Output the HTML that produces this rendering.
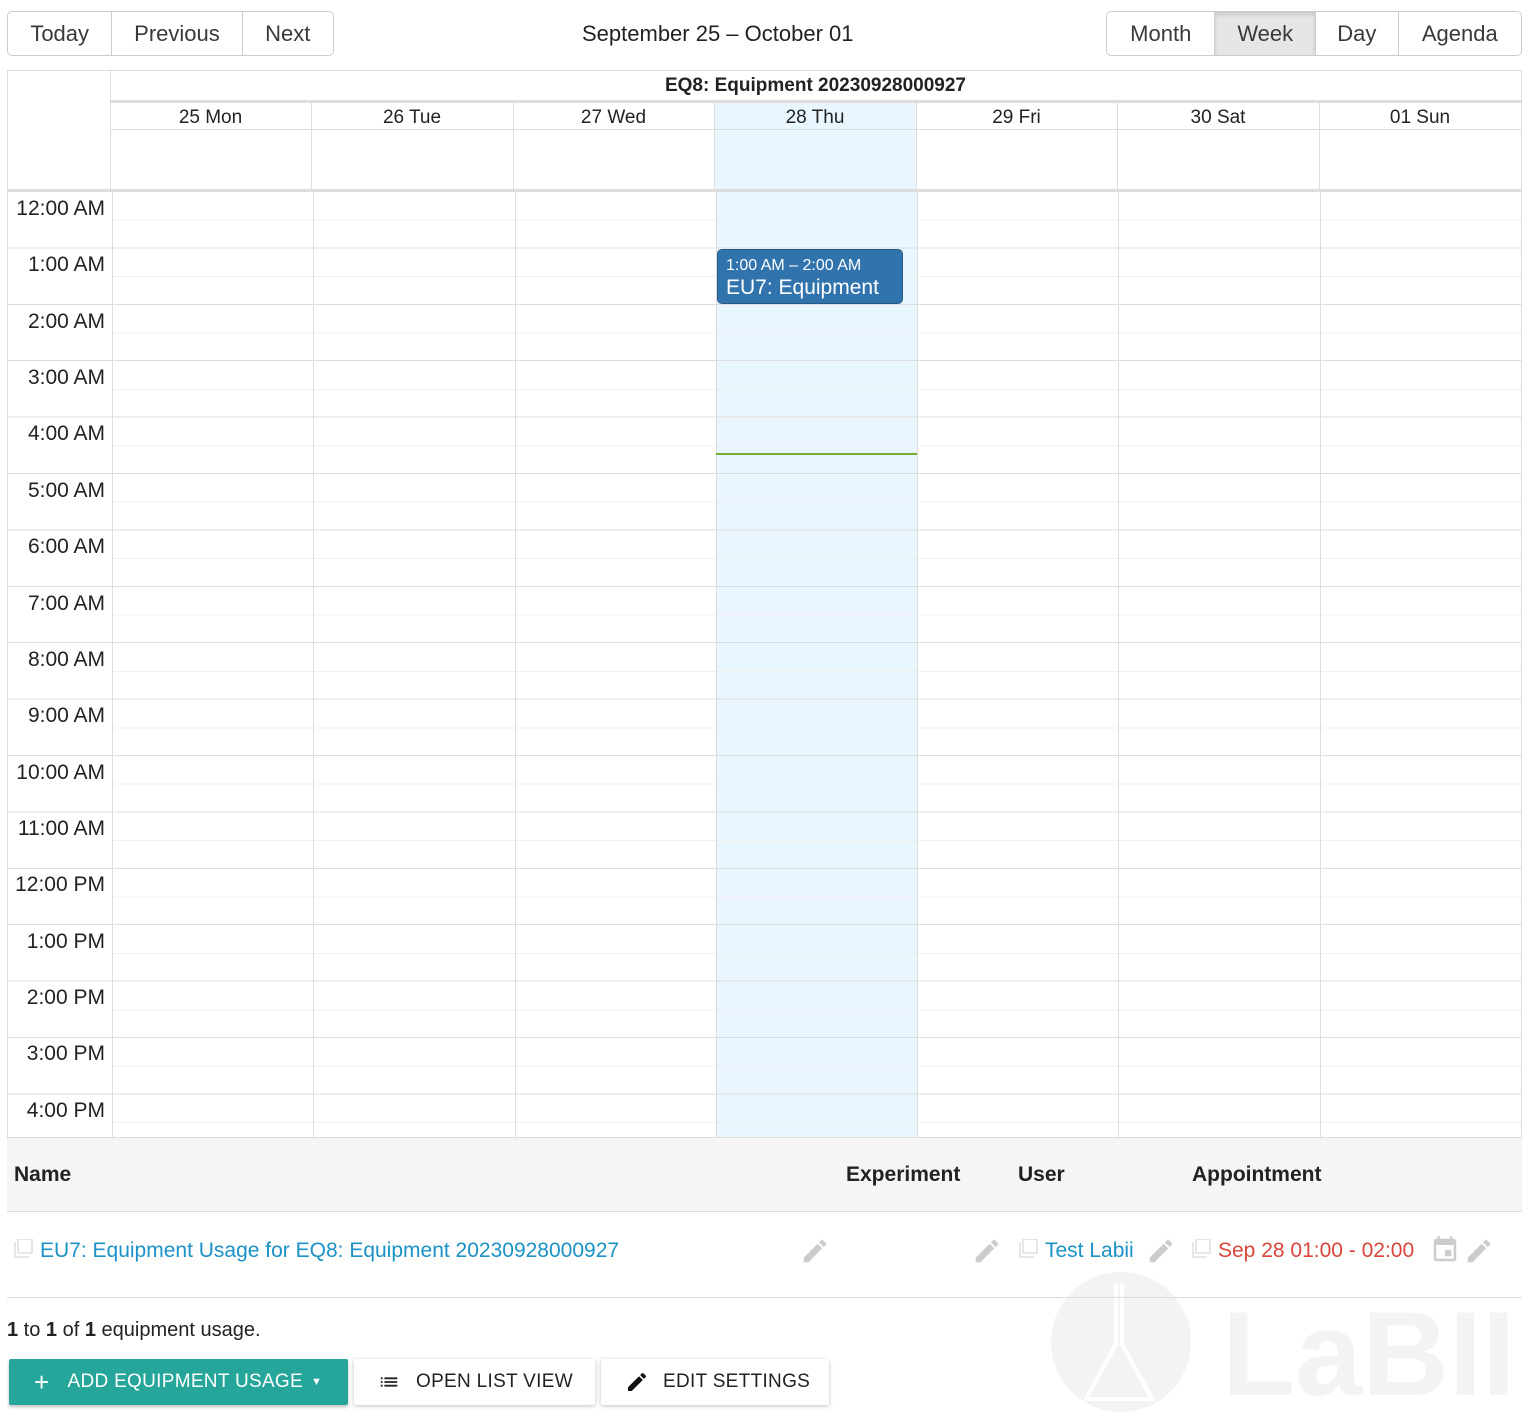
<!DOCTYPE html>
<html><head><meta charset="utf-8">
<style>
*{box-sizing:border-box;margin:0;padding:0}
body{width:1536px;height:1419px;background:#fff;font-family:"Liberation Sans",Arial,sans-serif;color:#333;position:relative;overflow:hidden}
.a{position:absolute}
.btng{position:absolute;top:11px;height:45px;border:1px solid #ccc;border-radius:5px;display:flex;overflow:hidden}
.btng div{height:100%;display:flex;align-items:center;justify-content:center;font-size:22px;color:#373a3c;border-right:1px solid #ccc}
.btng div:last-child{border-right:none}
.hl{position:absolute;background:#ddd}
.tl{position:absolute;left:6px;width:99px;text-align:right;font-size:21px;color:#222}
.dh{position:absolute;top:103px;height:27px;font-size:19px;color:#222;text-align:center;line-height:27px}
.th{position:absolute;top:1163px;font-size:21px;font-weight:bold;color:#222}
.pen{position:absolute}
</style></head><body>
<div class="btng" style="left:7px;width:327px">
<div style="width:105px">Today</div><div style="width:131px">Previous</div><div style="width:91px">Next</div></div>
<div class="a" style="left:582px;top:21px;font-size:22px;color:#222">September 25 – October 01</div>
<div class="btng" style="left:1106px;width:416px">
<div style="width:109px">Month</div><div style="width:101px;background:#e6e6e6;box-shadow:inset 0 3px 5px rgba(0,0,0,.12)">Week</div><div style="width:83px">Day</div><div style="width:123px">Agenda</div></div>

<div class="a" style="left:7px;top:70px;width:1515px;height:1068px;border:1px solid #ddd"></div>
<div class="a" style="left:714px;top:102px;width:202px;height:88px;background:#eaf6ff"></div>
<div class="a" style="left:716px;top:192px;width:201px;height:945px;background:#eaf6ff"></div>
<div class="hl" style="left:110px;top:70px;width:1px;height:121px"></div>
<div class="hl" style="left:110px;top:100px;width:1411px;height:3px"></div>
<div class="a" style="left:110px;top:75px;width:1411px;text-align:center;font-size:19px;font-weight:bold;color:#222">EQ8: Equipment 20230928000927</div>
<div class="hl" style="left:110px;top:129px;width:1411px;height:1px"></div>
<div class="hl" style="left:8px;top:189px;width:1513px;height:3px"></div>
<div class="hl" style="left:311px;top:102px;width:1px;height:88px"></div>
<div class="hl" style="left:513px;top:102px;width:1px;height:88px"></div>
<div class="hl" style="left:714px;top:102px;width:1px;height:88px"></div>
<div class="hl" style="left:916px;top:102px;width:1px;height:88px"></div>
<div class="hl" style="left:1117px;top:102px;width:1px;height:88px"></div>
<div class="hl" style="left:1319px;top:102px;width:1px;height:88px"></div>
<div class="dh" style="left:110px;width:201px;top:104px">25 Mon</div>
<div class="dh" style="left:311px;width:202px;top:104px">26 Tue</div>
<div class="dh" style="left:513px;width:201px;top:104px">27 Wed</div>
<div class="dh" style="left:714px;width:202px;top:104px">28 Thu</div>
<div class="dh" style="left:916px;width:201px;top:104px">29 Fri</div>
<div class="dh" style="left:1117px;width:202px;top:104px">30 Sat</div>
<div class="dh" style="left:1319px;width:202px;top:104px">01 Sun</div>
<div class="a" style="left:112px;top:192px;width:1409px;height:945px;background:repeating-linear-gradient(to bottom,transparent 0,transparent 27.7px,#f0f0f0 27.7px,#f0f0f0 28.7px,transparent 28.7px,transparent 55.4px,#ddd 55.4px,#ddd 56.4px)"></div>
<div class="a" style="left:8px;top:192px;width:104px;height:945px;background:repeating-linear-gradient(to bottom,transparent 0,transparent 55.4px,#ddd 55.4px,#ddd 56.4px)"></div>
<div class="hl" style="left:112px;top:192px;width:1px;height:945px"></div>
<div class="hl" style="left:313px;top:192px;width:1px;height:945px"></div>
<div class="hl" style="left:515px;top:192px;width:1px;height:945px"></div>
<div class="hl" style="left:716px;top:192px;width:1px;height:945px"></div>
<div class="hl" style="left:917px;top:192px;width:1px;height:945px"></div>
<div class="hl" style="left:1118px;top:192px;width:1px;height:945px"></div>
<div class="hl" style="left:1320px;top:192px;width:1px;height:945px"></div>
<div class="tl" style="top:197px">12:00 AM</div>
<div class="tl" style="top:253px">1:00 AM</div>
<div class="tl" style="top:310px">2:00 AM</div>
<div class="tl" style="top:366px">3:00 AM</div>
<div class="tl" style="top:422px">4:00 AM</div>
<div class="tl" style="top:479px">5:00 AM</div>
<div class="tl" style="top:535px">6:00 AM</div>
<div class="tl" style="top:592px">7:00 AM</div>
<div class="tl" style="top:648px">8:00 AM</div>
<div class="tl" style="top:704px">9:00 AM</div>
<div class="tl" style="top:761px">10:00 AM</div>
<div class="tl" style="top:817px">11:00 AM</div>
<div class="tl" style="top:873px">12:00 PM</div>
<div class="tl" style="top:930px">1:00 PM</div>
<div class="tl" style="top:986px">2:00 PM</div>
<div class="tl" style="top:1042px">3:00 PM</div>
<div class="tl" style="top:1099px">4:00 PM</div>
<div class="a" style="left:717px;top:249px;width:186px;height:55px;background:#3174ad;border:1px solid #265985;border-radius:5px;color:#fff;overflow:hidden;padding:7px 0 0 8px">
<div style="font-size:16px;line-height:18px">1:00 AM – 2:00 AM</div>
<div style="font-size:21px;line-height:26px">EU7: Equipment Usage for EQ8</div></div>
<div class="a" style="left:716px;top:453px;width:201px;height:2px;background:#74ad31"></div>

<svg class="a" style="left:1050px;top:1272px" width="486" height="147">
<circle cx="71" cy="70" r="70" fill="#f3f3f3"/>
<path d="M66 12v60l-30 55h66l-30-55V12" fill="none" stroke="#fff" stroke-width="4"/>
<text x="172" y="123" font-family="Liberation Sans" font-weight="bold" font-size="120" fill="#f3f3f3">LaBII</text>
</svg>

<div class="a" style="left:7px;top:1138px;width:1515px;height:74px;background:#f5f5f5;border-bottom:1px solid #ddd"></div>
<div class="th" style="left:14px">Name</div>
<div class="th" style="left:846px">Experiment</div>
<div class="th" style="left:1018px">User</div>
<div class="th" style="left:1192px">Appointment</div>
<div class="a" style="left:7px;top:1297px;width:1515px;height:1px;background:#ddd"></div>
<svg class="a" style="left:14px;top:1239px" width="20" height="20"><rect x="4" y="0" width="14" height="14" fill="none" stroke="#ddd" stroke-width="1.5"/><path d="M1 3v15h14" fill="none" stroke="#ddd" stroke-width="1.5"/></svg>
<div class="a" style="left:40px;top:1239px;font-size:21px;color:#1a92c7">EU7: Equipment Usage for EQ8: Equipment 20230928000927</div>
<svg class="pen" style="left:800px;top:1236px" width="30" height="30" viewBox="0 0 24 24"><path d="M3 17.25V21h3.75L17.81 9.94l-3.75-3.75L3 17.25zM20.71 7.04a1 1 0 000-1.41l-2.34-2.34a1 1 0 00-1.41 0l-1.83 1.83 3.75 3.75 1.83-1.83z" fill="#ccc"/></svg>
<svg class="pen" style="left:972px;top:1236px" width="30" height="30" viewBox="0 0 24 24"><path d="M3 17.25V21h3.75L17.81 9.94l-3.75-3.75L3 17.25zM20.71 7.04a1 1 0 000-1.41l-2.34-2.34a1 1 0 00-1.41 0l-1.83 1.83 3.75 3.75 1.83-1.83z" fill="#ccc"/></svg>
<svg class="a" style="left:1019px;top:1239px" width="20" height="20"><rect x="4" y="0" width="14" height="14" fill="none" stroke="#ddd" stroke-width="1.5"/><path d="M1 3v15h14" fill="none" stroke="#ddd" stroke-width="1.5"/></svg>
<div class="a" style="left:1045px;top:1239px;font-size:21px;color:#1a92c7">Test Labii</div>
<svg class="pen" style="left:1146px;top:1236px" width="30" height="30" viewBox="0 0 24 24"><path d="M3 17.25V21h3.75L17.81 9.94l-3.75-3.75L3 17.25zM20.71 7.04a1 1 0 000-1.41l-2.34-2.34a1 1 0 00-1.41 0l-1.83 1.83 3.75 3.75 1.83-1.83z" fill="#ccc"/></svg>
<svg class="a" style="left:1192px;top:1239px" width="20" height="20"><rect x="4" y="0" width="14" height="14" fill="none" stroke="#ddd" stroke-width="1.5"/><path d="M1 3v15h14" fill="none" stroke="#ddd" stroke-width="1.5"/></svg>
<div class="a" style="left:1218px;top:1239px;font-size:21px;color:#d9453b">Sep 28 01:00 - 02:00</div>
<svg class="a" style="left:1430px;top:1235px" width="30" height="30" viewBox="0 0 24 24"><path d="M17 12h-5v5h5v-5zM16 1v2H8V1H6v2H5a2 2 0 00-2 2v14a2 2 0 002 2h14a2 2 0 002-2V5a2 2 0 00-2-2h-1V1h-2zm3 18H5V8h14v11z" fill="#ccc"/></svg>
<svg class="pen" style="left:1464px;top:1236px" width="30" height="30" viewBox="0 0 24 24"><path d="M3 17.25V21h3.75L17.81 9.94l-3.75-3.75L3 17.25zM20.71 7.04a1 1 0 000-1.41l-2.34-2.34a1 1 0 00-1.41 0l-1.83 1.83 3.75 3.75 1.83-1.83z" fill="#ccc"/></svg>

<div class="a" style="left:7px;top:1319px;font-size:20px;color:#222"><b>1</b> to <b>1</b> of <b>1</b> equipment usage.</div>

<div class="a" style="left:9px;top:1359px;width:339px;height:46px;background:#26a69a;border-radius:2px;box-shadow:0 2px 3px rgba(0,0,0,.25);color:#fff;font-size:19px;letter-spacing:0.3px;display:flex;align-items:center;padding-left:25px">
<span style="font-size:26px;margin-right:18px;font-weight:300">+</span>ADD EQUIPMENT USAGE<span style="font-size:11px;margin-left:8px">▼</span></div>
<div class="a" style="left:354px;top:1359px;width:241px;height:46px;background:#fff;border-radius:2px;box-shadow:0 1px 4px rgba(0,0,0,.25);color:#222;font-size:19px;letter-spacing:0.3px;display:flex;align-items:center;padding-left:24px">
<svg width="22" height="22" viewBox="0 0 24 24" style="margin-right:16px"><path d="M3 7h2v2H3zm4 0h14v2H7zM3 11h2v2H3zm4 0h14v2H7zM3 15h2v2H3zm4 0h14v2H7z" fill="#222"/></svg>OPEN LIST VIEW</div>
<div class="a" style="left:601px;top:1359px;width:228px;height:46px;background:#fff;border-radius:2px;box-shadow:0 1px 4px rgba(0,0,0,.25);color:#222;font-size:19px;letter-spacing:0.3px;display:flex;align-items:center;padding-left:24px">
<svg width="24" height="24" viewBox="0 0 24 24" style="margin-right:14px"><path d="M3 17.25V21h3.75L17.81 9.94l-3.75-3.75L3 17.25zM20.71 7.04a1 1 0 000-1.41l-2.34-2.34a1 1 0 00-1.41 0l-1.83 1.83 3.75 3.75 1.83-1.83z" fill="#111"/></svg>EDIT SETTINGS</div>
</body></html>
